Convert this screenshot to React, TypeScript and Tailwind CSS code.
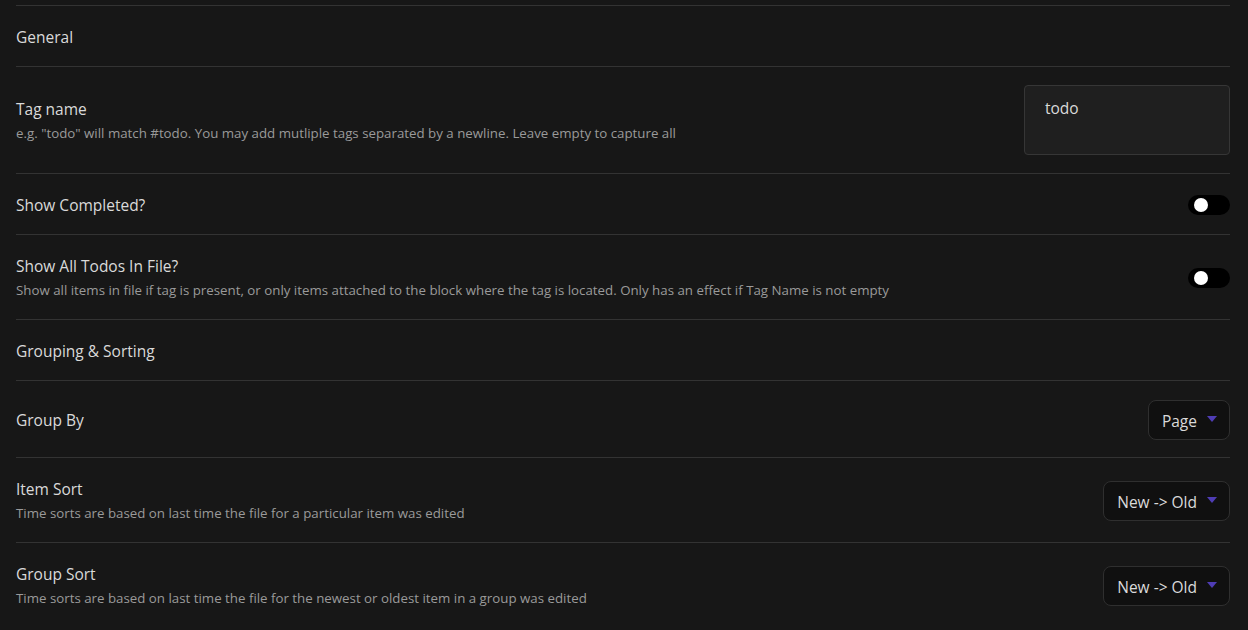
import React from "react";

const font = { fontFamily: '"Open Sans", "Noto Sans", sans-serif' };

function Toggle() {
  return (
    <div className="flex h-5 w-[42px] items-center rounded-full bg-black pl-[6px]">
      <div className="h-[14px] w-[14px] rounded-full bg-white" />
    </div>
  );
}

function Select({ value }: { value: string }) {
  return (
    <div className="flex h-10 items-center gap-[10px] rounded-lg border border-[#2f2f2f] bg-[#101010] pl-[13px] pr-3 pt-[3px] text-[15.5px] text-[#dadada]">
      <span>{value}</span>
      <svg width="10" height="6" viewBox="0 0 10 6" className="mb-[6px]">
        <path d="M0 0h10L5 6z" fill="#4f3db5" />
      </svg>
    </div>
  );
}

function Row({
  name,
  desc,
  control,
}: {
  name: string;
  desc?: string;
  control?: React.ReactNode;
}) {
  return (
    <div className="flex items-center border-t border-[#333] pb-[17px] pt-[19px]">
      <div className="flex flex-1 flex-col justify-center">
        <div className="h-6 text-[15.5px] leading-6 text-[#dadada]">{name}</div>
        {desc && <div className="h-6 text-[13.3px] leading-6 text-[#9a9a9a]">{desc}</div>}
      </div>
      {control}
    </div>
  );
}

export default function App() {
  return (
    <div className="min-h-[630px] bg-[#171717] pt-[5px]" style={font}>
      <div className="ml-4 mr-[18px]">
        <Row name="General" />
        <Row
          name="Tag name"
          desc={'e.g. "todo" will match #todo. You may add mutliple tags separated by a newline. Leave empty to capture all'}
          control={
            <div className="-mt-px mb-px h-[70px] w-[206px] rounded border border-[#363636] bg-[#1f1f1f] pl-[20px] pt-[11px] text-[15.5px] text-[#dadada]">
              todo
            </div>
          }
        />
        <Row name="Show Completed?" control={<Toggle />} />
        <Row
          name="Show All Todos In File?"
          desc="Show all items in file if tag is present, or only items attached to the block where the tag is located. Only has an effect if Tag Name is not empty"
          control={<Toggle />}
        />
        <Row name="Grouping & Sorting" />
        <Row name="Group By" control={<Select value="Page" />} />
        <Row
          name="Item Sort"
          desc="Time sorts are based on last time the file for a particular item was edited"
          control={<Select value="New -> Old" />}
        />
        <Row
          name="Group Sort"
          desc="Time sorts are based on last time the file for the newest or oldest item in a group was edited"
          control={<Select value="New -> Old" />}
        />
      </div>
    </div>
  );
}
